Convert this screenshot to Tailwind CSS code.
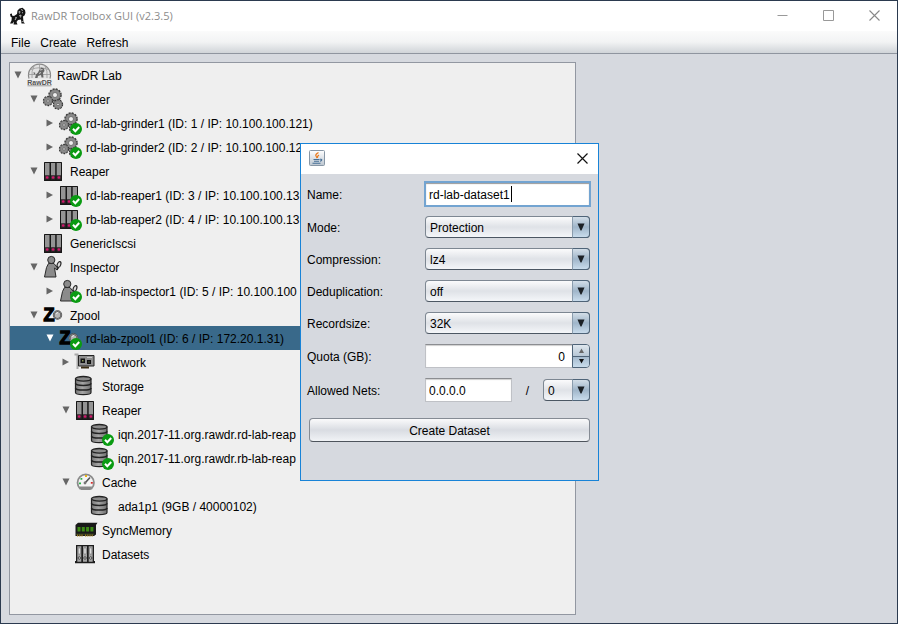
<!DOCTYPE html>
<html lang="en">
<head>
<meta charset="utf-8">
<meta name="viewport" content="width=device-width, initial-scale=1">
<title>RawDR Toolbox GUI (v2.3.5)</title>
<script src="https://cdn.jsdelivr.net/npm/@tailwindcss/browser@4"></script>
</head>
<body class="relative flex min-h-screen flex-col overflow-hidden border border-[#2b3a4f] bg-[#d6d9df] font-['Liberation_Sans',Arial,sans-serif] text-xs text-black">

<!-- Icon library -->
<svg class="absolute h-0 w-0" aria-hidden="true">
  <defs>
    <linearGradient id="metal" x1="0" x2="1" y1="0" y2="0"><stop offset="0" stop-color="#777"/><stop offset=".45" stop-color="#a5a5a5"/><stop offset="1" stop-color="#707070"/></linearGradient>
    <symbol id="i-lab" viewBox="0 0 27 24">
      <path d="M3 15.500A11 11 0 1 1 24 15.500" fill="#e2e2e2" stroke="#888" stroke-width="1.200"/>
      <path d="M5 6.500Q13.500 3 22 6.500M2.500 11.500H24.500M13.500 1V6M8.500 2Q5 8 6 15M18.500 2Q22 8 21 15" fill="none" stroke="#999" stroke-width=".8"/>
      <path d="M9 15L10 11.500L12 9.500L13.500 6.500L15.500 4.500L18 5.500L18.500 8L17 10L17.500 14.500H15.500L15 12L12 13L11.500 15ZM8 12L9.500 10L7.500 9" fill="#666"/>
      <path d="M14 7L16.500 6.500M13 10.500L15 9.500" stroke="#ddd" stroke-width=".9"/>
      <text x="13.500" y="21.800" text-anchor="middle" font-family="Liberation Sans" font-size="7" font-weight="700" fill="#555">RawDR</text>
      <path d="M1.500 22.800H25.500" stroke="#888" stroke-width=".8"/>
    </symbol>
    <symbol id="i-gears" viewBox="0 0 24 24">
      <g fill="#8b8b8b" stroke="#333">
        <circle cx="13" cy="8" r="6" stroke-width="1.500" stroke-dasharray="2 1.140"/><circle cx="13" cy="8" r="5.300" stroke="#666" stroke-width=".6"/>
        <circle cx="6" cy="14" r="4.500" stroke-width="1.300" stroke-dasharray="1.800 1.030"/><circle cx="6" cy="14" r="3.900" stroke="#666" stroke-width=".5"/>
        <circle cx="16" cy="17.500" r="4.500" stroke-width="1.300" stroke-dasharray="1.800 1.030"/><circle cx="16" cy="17.500" r="3.900" stroke="#666" stroke-width=".5"/>
      </g>
      <g fill="#efefef" stroke="#555" stroke-width=".7"><circle cx="13" cy="8" r="2.500"/><circle cx="6" cy="14" r="1.200"/><circle cx="16" cy="17.500" r="1.200"/></g>
    </symbol>
    <symbol id="i-reaper" viewBox="0 0 24 24">
      <rect x="2" y="3" width="18" height="19" rx=".5" fill="#171717"/>
      <path d="M3 4h4.500v12.500H3zM9 4h4.200v12.500H9zM14.700 4h4.300v12.500h-4.300z" fill="#949494"/>
      <path d="M3 16.500h4.500v4H3zM9 16.500h4.200v4H9zM14.700 16.500h4.300v4h-4.300z" fill="#3a2a31"/>
      <g fill="#d3166c"><circle cx="5.200" cy="18.500" r="1.300"/><circle cx="11.100" cy="18.500" r="1.300"/><circle cx="16.900" cy="18.500" r="1.300"/></g>
    </symbol>
    <symbol id="i-inspector" viewBox="0 0 24 24">
      <path d="M6.500 8.500H12L16 13.500L15 15L12.500 13L14 22H2.500L4.500 12.500Z" fill="#8b8b8b" stroke="#2a2a2a" stroke-linejoin="round"/>
      <circle cx="9.300" cy="5" r="3.600" fill="#8b8b8b" stroke="#2a2a2a"/>
      <ellipse cx="17" cy="9.500" rx="1.700" ry="3" transform="rotate(20 17 9.500)" fill="#ddd" stroke="#2a2a2a" stroke-width="1.200"/>
      <path d="M16 12.500L15 15" stroke="#222" stroke-width="1.500"/>
    </symbol>
    <symbol id="i-zpool" viewBox="0 0 24 24">
      <circle cx="15.500" cy="12" r="3.800" fill="#b5b5b5" stroke="#444" stroke-width="1.800"/>
      <circle cx="15.500" cy="12" r="3.900" fill="none" stroke="#999" stroke-width=".7"/>
      <path d="M14 10.500l2-1" stroke="#eee"/>
      <text x="1.500" y="18.300" font-family="Liberation Sans" font-size="18" font-weight="700" stroke="#000" stroke-width="1.300">Z</text>
    </symbol>
    <symbol id="i-network" viewBox="0 0 24 24">
      <path d="M.5 4.500H3.500V19" fill="none" stroke="#aaa" stroke-width="2"/>
      <path d="M4.500 5.500H20V16H4.500Z" fill="#8e8e8e" stroke="#222"/>
      <path d="M7 16.500H15V18.500H7Z" fill="#3a2d13"/>
      <path d="M6.500 8.500h4.500v4.500H6.500zM13 10h4v4h-4z" fill="#111"/>
      <path d="M8 10h1.500v1.500H8zM14.500 11.500h1v1h-1z" fill="#8b9a55"/><path d="M13 7.500h5" stroke="#c6c6c6"/>
    </symbol>
    <symbol id="i-disk" viewBox="0 0 24 24">
      <path d="M1.500 5V18.500C1.500 21.300 17 21.300 17 18.500V5Z" fill="url(#metal)" stroke="#222" stroke-width="1.200"/>
      <ellipse cx="9.250" cy="4.800" rx="7.750" ry="2.300" fill="#8a8a8a" stroke="#222" stroke-width="1.300"/>
      <path d="M1.500 9.300C1.500 12.100 17 12.100 17 9.300M1.500 14C1.500 16.800 17 16.800 17 14" fill="none" stroke="#222" stroke-width="1.500"/>
    </symbol>
    <symbol id="i-cache" viewBox="0 0 24 24">
      <path d="M6 18.500A8.200 8.200 0 1 1 17.500 18.500Z" fill="#f4f4f4" stroke="#8b8b8b" stroke-width="1.800"/>
      <path d="M5.500 16.500H18L16.500 20H7Z" fill="#888"/>
      <path d="M11 13L16 7.500" stroke="#555" stroke-width="1.600"/><circle cx="11" cy="13" r="1.400" fill="#777"/>
      <path d="M5 12.500h2v1.700H5zM6.500 8h1.800v1.800H6.500z" fill="#2cb34a"/><path d="M11 5h2v2h-2z" fill="#e8b414"/><path d="M16.800 12h2v1.700h-2z" fill="#d52f2f"/>
    </symbol>
    <symbol id="i-memory" viewBox="0 0 24 24">
      <path d="M1.500 7L4 4.700H23.500L22 7V16.500L20 18H1.500Z" fill="#191919"/>
      <path d="M2 15.500H20V17H2Z" fill="#333b20"/>
      <path d="M3.500 9h3v4.500h-3zM7.800 9h3v4.500h-3zM12.100 9h3v4.500h-3zM16.400 9h3v4.500h-3z" fill="#3d8a16"/>
      <path d="M3 17.500H9M11 17.500H19" stroke="#9a7b1e" stroke-width="2" stroke-dasharray="1 .8"/>
    </symbol>
    <symbol id="i-datasets" viewBox="0 0 24 24">
      <path d="M2 3H20V19H21V21.200H1V19H2Z" fill="#1d1d1d"/>
      <path d="M3.300 4.300h4v15.500h-4zM9 4.300h4v15.500H9zM14.700 4.300h4v15.500h-4z" fill="#a5a5a5"/>
      <path d="M4.300 6h2v6h-2zM10 6h2v6h-2zM15.700 6h2v6h-2z" fill="#ededed" stroke="#666" stroke-width=".5"/>
      <g fill="#eee" stroke="#222" stroke-width=".8"><circle cx="5.300" cy="16" r="1.200"/><circle cx="11" cy="16" r="1.200"/><circle cx="16.700" cy="16" r="1.200"/></g>
    </symbol>
    <symbol id="i-ok" viewBox="0 0 12 12"><circle cx="6" cy="6" r="6" fill="#0a9b12"/><path d="M3 5.800L5.300 8.200L9.200 4" fill="none" stroke="#fff" stroke-width="2"/></symbol>
    <symbol id="i-open" viewBox="0 0 8 8"><path d="M.5 .5H7.500L4 7.500Z" fill="currentColor"/></symbol>
    <symbol id="i-closed" viewBox="0 0 8 8"><path d="M.5 .5V7.500L7 4Z" fill="currentColor"/></symbol>
    <symbol id="i-drop" viewBox="0 0 8 8"><path d="M.5 .5H7.500L4.500 7.500H3.500Z" fill="#1c2126"/></symbol>
  </defs>
</svg>

<header class="flex h-[30px] items-center bg-white pl-2">
  <svg class="h-[18px] w-[17px]" viewBox="0 0 17 18" aria-hidden="true">
    <path d="M1 7L3 6.500L3 8.500L5 9L8 7L8.500 3.500L10.500 1.500L13.500 .8L16 3L16.500 6L15.500 8.500L14 9.500L14.500 15L16 16.500H12.500L12 12.500L9 13L7.500 15L8.500 17.500H4.500L5 14.500L3.500 16.500H1L2.500 13.500L2.800 10.500L1.500 9.500Z" fill="#151515"/>
    <path d="M9.500 5L11 4.500L10.500 6.500M12 2.500L14 3.500M10 9L12 8L11.500 10.500M6 11L7.500 10.500L6 13M13 6L14 5.500M13 14L13.500 15" fill="none" stroke="#b5b5b5"/>
  </svg>
  <h1 class="ml-[5px] grow font-['Open_Sans','Noto_Sans',sans-serif] text-[11px] text-[#8c8c8c]">RawDR Toolbox GUI (v2.3.5)</h1>
  <div class="flex gap-[35px] pr-[17px] pb-[2px]">
    <button aria-label="Minimize"><svg class="block h-[11px] w-[11px]" viewBox="0 0 11 11"><path d="M.5 5.500H10.500" stroke="#999"/></svg></button>
    <button aria-label="Maximize"><svg class="block h-[11px] w-[11px]" viewBox="0 0 11 11"><path d="M.5 .5H10.500V10.500H.5Z" fill="none" stroke="#999"/></svg></button>
    <button aria-label="Close"><svg class="block h-[11px] w-[11px]" viewBox="0 0 11 11"><path d="M.5 .5L10.500 10.500M10.500 .5L.5 10.500" stroke="#888" stroke-width="1.100"/></svg></button>
  </div>
</header>

<nav class="flex h-[23px] items-center gap-[10px] border-b border-[#8f959f] bg-linear-to-b from-[#fbfbfb] via-[#f2f3f4] to-[#d0d4d8] pt-[2px] pl-[10px]">
  <button>File</button>
  <button>Create</button>
  <button>Refresh</button>
</nav>

<main class="flex grow pt-2 pr-[321px] pb-2 pl-2">
  <div id="tree" role="tree" aria-label="RawDR Lab" class="grow overflow-hidden border border-[#9297a1] bg-[#efefef]"></div>
</main>

<section role="dialog" aria-label="Create Dataset" class="absolute top-[142px] left-[299px] w-[299px] border border-[#1883d7] bg-[#d6d9df]">
  <div class="flex h-[30px] items-center justify-between bg-white pr-[10px] pb-[2px] pl-2">
    <svg class="h-4 w-4" viewBox="0 0 16 16" aria-hidden="true">
      <defs><linearGradient id="jv" x1="0" x2="0" y1="0" y2="1"><stop offset="0" stop-color="#fff"/><stop offset="1" stop-color="#bcc6d0"/></linearGradient></defs>
      <rect x=".5" y=".5" width="15" height="15" rx="1" fill="url(#jv)" stroke="#8796a5"/>
      <path d="M9.500 2.500Q6 4.500 7 6T7.500 8M10 5Q8 6 8.500 8" fill="none" stroke="#ec7a1c" stroke-width="1.300"/>
      <path d="M4.500 9.500H10.500M5 11.300H10M3.500 13.300H11.500M11 9.300Q13.500 8.800 12.500 10.500L11 11.300" fill="none" stroke="#466f96" stroke-width="1.100"/>
    </svg>
    <button aria-label="Close dialog"><svg class="block h-[11px] w-[11px]" viewBox="0 0 11 11"><path d="M.5 .5L10.500 10.500M10.500 .5L.5 10.500" stroke="#111" stroke-width="1.200"/></svg></button>
  </div>
  <form class="flex flex-col gap-[10px] pt-2 pr-2 pb-[38px] pl-[6px]" onsubmit="return false">
    <div class="flex items-center">
      <label for="name" class="w-[118px] pt-[2px]">Name:</label>
      <div class="relative grow">
        <input id="name" value="rd-lab-dataset1" class="block h-6 w-full border border-[#73a4d1] bg-white px-[3px] pt-[2px] shadow-[inset_0_1px_1px_#9a9a9a] outline-1 outline-[#73a4d1]">
        <span class="absolute top-1 left-[86px] h-4 w-px bg-black"></span>
      </div>
    </div>
    <div class="flex items-center">
      <label for="mode" class="w-[118px] pt-[2px]">Mode:</label>
      <div class="relative grow">
        <select id="mode" class="block h-[22px] w-full appearance-none rounded border border-[#7d8792] border-b-[#4c5763] bg-linear-to-b from-[#fbfbfc] via-[#dfe2e7] to-[#f4f6f9] pt-[2px] pl-1"><option>Protection</option></select>
        <span class="pointer-events-none absolute inset-y-0 right-0 flex w-[18px] items-center justify-center rounded-r border border-[#4f6478] border-l-[#8a9cad] bg-linear-to-b from-[#d3dee8] via-[#9fb5c9] to-[#c9dcec]"><svg class="h-2 w-2"><use href="#i-drop"/></svg></span>
      </div>
    </div>
    <div class="flex items-center">
      <label for="compression" class="w-[118px] pt-[2px]">Compression:</label>
      <div class="relative grow">
        <select id="compression" class="block h-[22px] w-full appearance-none rounded border border-[#7d8792] border-b-[#4c5763] bg-linear-to-b from-[#fbfbfc] via-[#dfe2e7] to-[#f4f6f9] pt-[2px] pl-1"><option>lz4</option></select>
        <span class="pointer-events-none absolute inset-y-0 right-0 flex w-[18px] items-center justify-center rounded-r border border-[#4f6478] border-l-[#8a9cad] bg-linear-to-b from-[#d3dee8] via-[#9fb5c9] to-[#c9dcec]"><svg class="h-2 w-2"><use href="#i-drop"/></svg></span>
      </div>
    </div>
    <div class="flex items-center">
      <label for="dedup" class="w-[118px] pt-[2px]">Deduplication:</label>
      <div class="relative grow">
        <select id="dedup" class="block h-[22px] w-full appearance-none rounded border border-[#7d8792] border-b-[#4c5763] bg-linear-to-b from-[#fbfbfc] via-[#dfe2e7] to-[#f4f6f9] pt-[2px] pl-1"><option>off</option></select>
        <span class="pointer-events-none absolute inset-y-0 right-0 flex w-[18px] items-center justify-center rounded-r border border-[#4f6478] border-l-[#8a9cad] bg-linear-to-b from-[#d3dee8] via-[#9fb5c9] to-[#c9dcec]"><svg class="h-2 w-2"><use href="#i-drop"/></svg></span>
      </div>
    </div>
    <div class="flex items-center">
      <label for="recordsize" class="w-[118px] pt-[2px]">Recordsize:</label>
      <div class="relative grow">
        <select id="recordsize" class="block h-[22px] w-full appearance-none rounded border border-[#7d8792] border-b-[#4c5763] bg-linear-to-b from-[#fbfbfc] via-[#dfe2e7] to-[#f4f6f9] pt-[2px] pl-1"><option>32K</option></select>
        <span class="pointer-events-none absolute inset-y-0 right-0 flex w-[18px] items-center justify-center rounded-r border border-[#4f6478] border-l-[#8a9cad] bg-linear-to-b from-[#d3dee8] via-[#9fb5c9] to-[#c9dcec]"><svg class="h-2 w-2"><use href="#i-drop"/></svg></span>
      </div>
    </div>
    <div class="flex items-center">
      <label for="quota" class="w-[118px] pt-[2px]">Quota (GB):</label>
      <div class="flex h-6 min-w-0 grow">
        <input id="quota" inputmode="numeric" value="0" class="w-0 grow border border-r-0 border-[#bfc1c6] border-t-[#8b8d91] bg-white px-[7px] pt-[2px] text-right shadow-[inset_0_1px_1px_#cfcfcf]">
        <div class="flex w-[18px] flex-col overflow-hidden rounded-r border border-[#4f6478]">
          <button type="button" aria-label="Increase quota" class="flex grow items-center justify-center border-b border-[#4f6478] bg-linear-to-b from-[#dfe7ee] to-[#b7c7d5]"><svg class="h-[5px] w-[5px]" viewBox="0 0 5 5"><path d="M0 5H5L2.500 .5Z" fill="#666"/></svg></button>
          <button type="button" aria-label="Decrease quota" class="flex grow items-center justify-center bg-linear-to-b from-[#a5bacd] to-[#c9dcec]"><svg class="h-[5px] w-[5px]" viewBox="0 0 5 5"><path d="M0 0H5L2.500 4.500Z" fill="#111"/></svg></button>
        </div>
      </div>
    </div>
    <div class="flex items-center">
      <label for="net" class="w-[118px] pt-[2px]">Allowed Nets:</label>
      <input id="net" value="0.0.0.0" class="h-6 w-[87px] border border-[#bfc1c6] border-t-[#8b8d91] bg-white px-[3px] pt-[2px] shadow-[inset_0_1px_1px_#cfcfcf]">
      <label for="prefix" class="grow pt-[2px] text-center">/</label>
      <div class="relative w-[47px]">
        <select id="prefix" class="block h-[22px] w-full appearance-none rounded border border-[#7d8792] border-b-[#4c5763] bg-linear-to-b from-[#fbfbfc] via-[#dfe2e7] to-[#f4f6f9] pt-[2px] pl-1"><option>0</option></select>
        <span class="pointer-events-none absolute inset-y-0 right-0 flex w-[18px] items-center justify-center rounded-r border border-[#4f6478] border-l-[#8a9cad] bg-linear-to-b from-[#d3dee8] via-[#9fb5c9] to-[#c9dcec]"><svg class="h-2 w-2"><use href="#i-drop"/></svg></span>
      </div>
    </div>
    <button class="mt-[6px] ml-[2px] h-6 rounded border border-[#858b94] border-b-[#4e545c] bg-linear-to-b from-[#fafafb] via-[#d9dce2] to-[#f1f3f6] pt-[2px]">Create Dataset</button>
  </form>
</section>

<script>
// Each node: depth, toggle state, icon, status badge, label
const nodes = [
  [0, 'open', 'lab', 0, 'RawDR Lab'],
  [1, 'open', 'gears', 0, 'Grinder'],
  [2, 'closed', 'gears', 1, 'rd-lab-grinder1 (ID: 1 / IP: 10.100.100.121)'],
  [2, 'closed', 'gears', 1, 'rd-lab-grinder2 (ID: 2 / IP: 10.100.100.12'],
  [1, 'open', 'reaper', 0, 'Reaper'],
  [2, 'closed', 'reaper', 1, 'rd-lab-reaper1 (ID: 3 / IP: 10.100.100.13'],
  [2, 'closed', 'reaper', 1, 'rb-lab-reaper2 (ID: 4 / IP: 10.100.100.13'],
  [1, '', 'reaper', 0, 'GenericIscsi'],
  [1, 'open', 'inspector', 0, 'Inspector'],
  [2, 'closed', 'inspector', 1, 'rd-lab-inspector1 (ID: 5 / IP: 10.100.100'],
  [1, 'open', 'zpool', 0, 'Zpool'],
  [2, 'open', 'zpool', 1, 'rd-lab-zpool1 (ID: 6 / IP: 172.20.1.31)'],
  [3, 'closed', 'network', 0, 'Network'],
  [3, '', 'disk', 0, 'Storage'],
  [3, 'open', 'reaper', 0, 'Reaper'],
  [4, '', 'disk', 1, 'iqn.2017-11.org.rawdr.rd-lab-reap'],
  [4, '', 'disk', 1, 'iqn.2017-11.org.rawdr.rb-lab-reap'],
  [3, 'open', 'cache', 0, 'Cache'],
  [4, '', 'disk', 0, 'ada1p1 (9GB / 40000102)'],
  [3, '', 'memory', 0, 'SyncMemory'],
  [3, '', 'datasets', 0, 'Datasets'],
];
const indent = ['pl-1', 'pl-5', 'pl-9', 'pl-[52px]', 'pl-[68px]'];
document.getElementById('tree').innerHTML = nodes.map(([depth, state, icon, ok, label]) => {
  const selected = label.startsWith('rd-lab-zpool1');
  const row = selected ? 'bg-[#39698a]' : '';
  const arrow = selected ? 'text-white' : 'text-[#666]';
  const height = label === 'Zpool' ? 'h-[23px]' : 'h-6';
  const width = icon === 'lab' ? 'w-[27px]' : 'w-6';
  return `<div role="treeitem" aria-level="${depth + 1}" aria-selected="${selected}" class="flex items-center ${height} ${row} ${indent[depth]}">
    ${state ? `<button aria-label="Toggle ${label}" class="h-2 w-2 shrink-0 ${arrow}"><svg class="block h-2 w-2"><use href="#i-${state}"/></svg></button>` : '<span class="w-2 shrink-0"></span>'}
    <span class="relative ml-1 h-6 shrink-0 ${width}"><svg class="h-6 ${width}"><use href="#i-${icon}"/></svg>${ok ? '<svg class="absolute right-0 bottom-0 h-3 w-3"><use href="#i-ok"/></svg>' : ''}</span>
    <span class="ml-1 pt-[2px] whitespace-nowrap">${label}</span>
  </div>`;
}).join('');
</script>
</body>
</html>
